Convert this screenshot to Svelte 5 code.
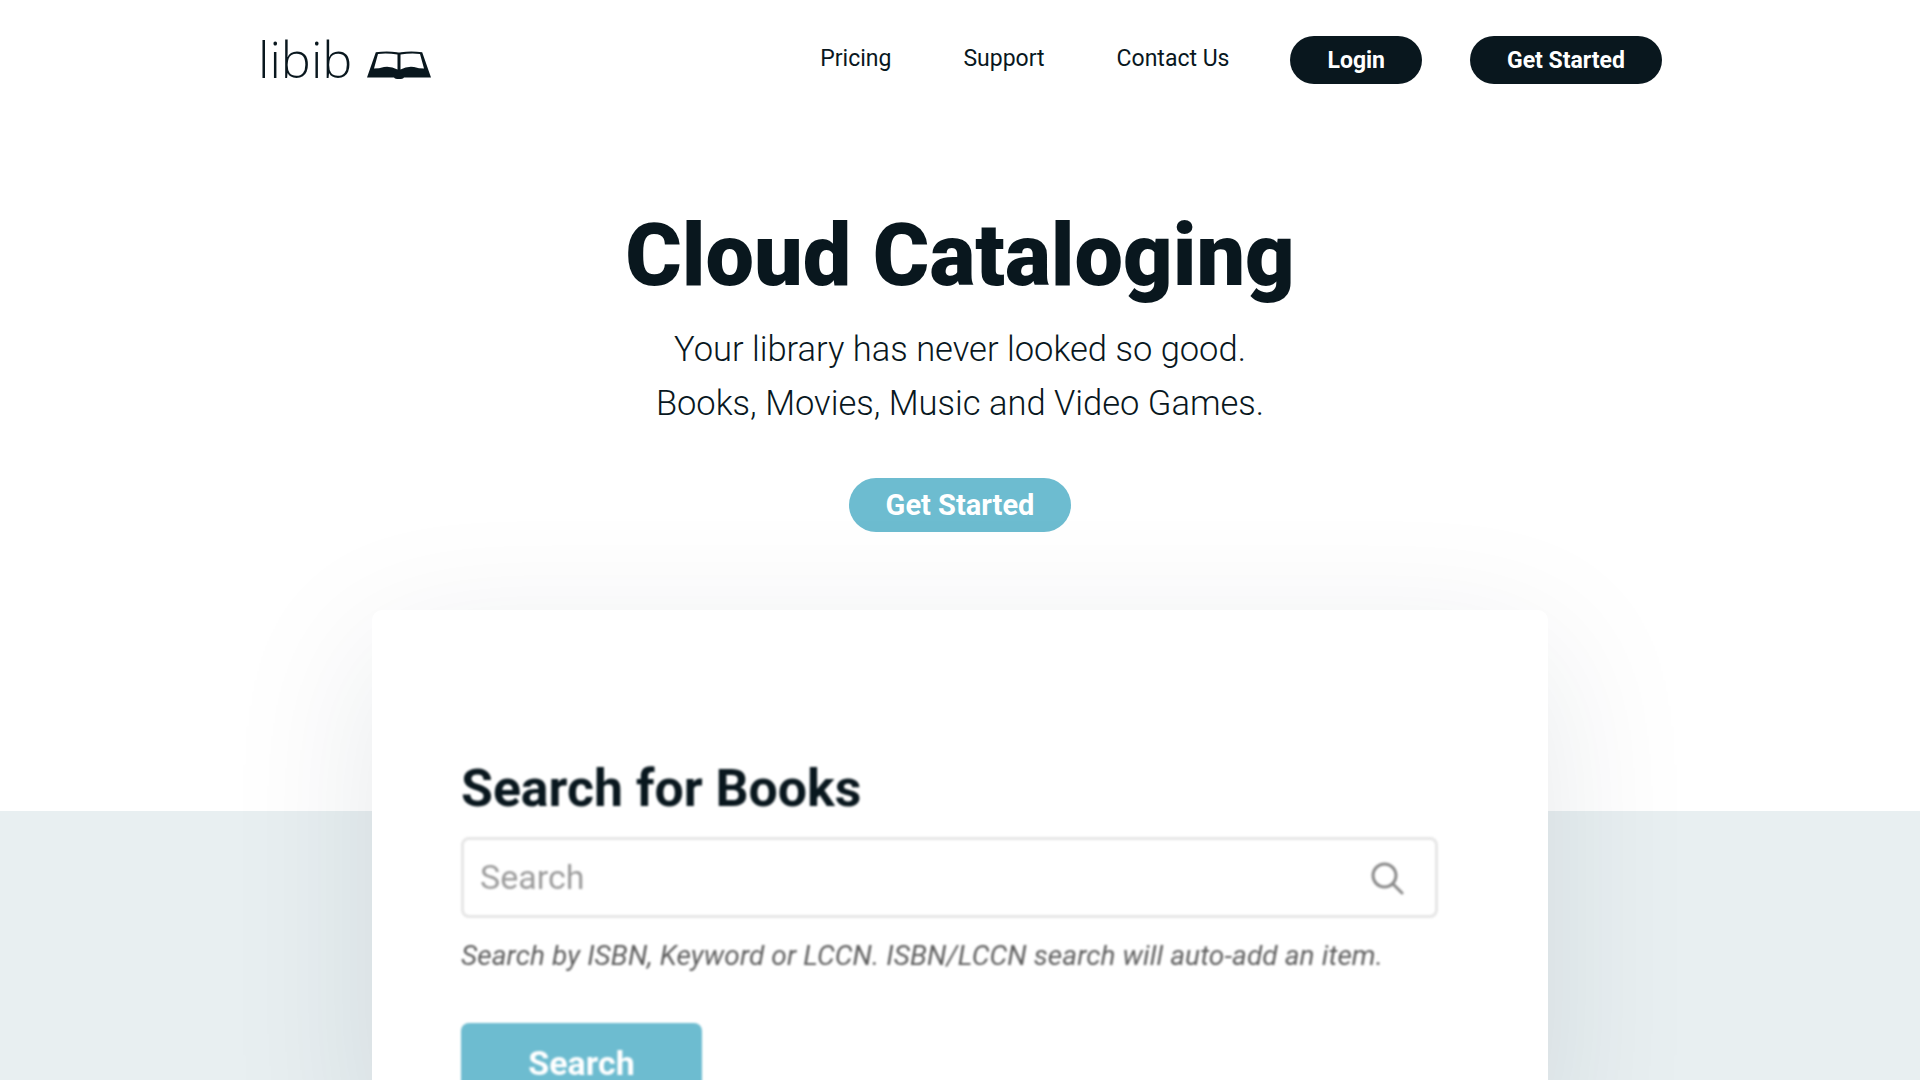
<script>
	const links = ['Pricing', 'Support', 'Contact Us'];
</script>

<div class="page">
	<header class="nav">
		<a class="logo" href="#top">
			<span class="logo-text">libib</span>
			<svg class="book" viewBox="0 0 64 28" aria-hidden="true">
				<path
					fill-rule="evenodd"
					d="M0 26.5 L8.8 1.2 Q20 -0.3 30 1.2 Q32 2 34 1.2 Q44 -0.3 55.2 1.2 L64 26.5 L37 26.5 Q36 28 32 28 Q28 28 27 26.5 Z
					M11 3 L7 17.5 Q12 17.5 17 16 Q24 15 30.5 18.5 L30.5 3.6 Q20 1.8 11 3 Z
					M53 3 L57 17.5 Q52 17.5 47 16 Q40 15 33.5 18.5 L33.5 3.6 Q44 1.8 53 3 Z"
				/>
			</svg>
		</a>
		<nav class="menu">
			{#each links as link}
				<a class="menu-link" href="#top">{link}</a>
			{/each}
			<a class="pill login" href="#top">Login</a>
			<a class="pill" href="#top">Get Started</a>
		</nav>
	</header>

	<section class="hero">
		<h1>Cloud Cataloging</h1>
		<p>Your library has never looked so good.<br />Books, Movies, Music and Video Games.</p>
		<a class="cta" href="#top">Get Started</a>
	</section>

	<section class="demo">
		<div class="card">
			<div class="card-inner">
				<h2>Search for Books</h2>
				<div class="search">
					<span class="placeholder">Search</span>
					<svg class="glass" viewBox="0 0 34 34" aria-hidden="true">
						<circle cx="14.5" cy="14.5" r="11.5" />
						<path d="M23 23 L32 32" />
					</svg>
				</div>
				<p class="hint">Search by ISBN, Keyword or LCCN. ISBN/LCCN search will auto-add an item.</p>
				<div class="search-btn">Search</div>
			</div>
		</div>
	</section>
</div>

<style>
	:global(body) {
		margin: 0;
		background: #fff;
	}

	.page {
		height: 1080px;
		overflow: hidden;
		font-family: Roboto, 'Liberation Sans', sans-serif;
		color: #09171e;
	}

	a {
		color: inherit;
		text-decoration: none;
	}

	.nav {
		display: flex;
		justify-content: space-between;
		align-items: center;
		padding: 36px 258px 0 258px;
		height: 48px;
	}

	.logo {
		display: flex;
		align-items: center;
		gap: 15px;
		margin-top: -2px;
	}

	.logo-text {
		font-family: 'Open Sans', sans-serif;
		font-weight: 300;
		font-size: 50.5px;
		line-height: 48px;
	}

	.book {
		width: 64px;
		height: 28px;
		margin-top: 11px;
		fill: #09171e;
	}

	.menu {
		display: flex;
		align-items: center;
	}

	.menu-link {
		font-size: 23px;
		margin: -4px 72px 0 0;
	}

	.menu-link:nth-child(3) {
		margin-right: 61px;
	}

	.pill {
		display: flex;
		align-items: center;
		height: 48px;
		padding: 0 37px;
		border-radius: 24px;
		background: #09171e;
		color: #fff;
		font-size: 23px;
		font-weight: 700;
	}

	.login {
		margin-right: 48px;
	}

	.hero {
		display: flex;
		flex-direction: column;
		align-items: center;
		padding-top: 118px;
	}

	h1 {
		margin: 0;
		font-size: 86.3px;
		line-height: 108px;
		font-weight: 900;
	}

	.hero p {
		margin: 12px 0 0;
		font-size: 34.5px;
		line-height: 54px;
		font-weight: 300;
		text-align: center;
	}

	.cta {
		display: flex;
		align-items: center;
		height: 54px;
		margin-top: 48px;
		padding: 0 37px;
		border-radius: 27px;
		background: #6dbcd0;
		color: #fff;
		font-size: 29px;
		font-weight: 700;
	}

	.demo {
		display: flex;
		justify-content: center;
		margin-top: 78px;
		height: 470px;
		background: linear-gradient(#fff 201px, #e8eff1 201px);
	}

	.card {
		width: 1176px;
		height: 520px;
		border-radius: 10px;
		background: #fff;
		box-shadow: 0 40px 150px rgba(9, 40, 60, 0.1);
	}

	.card-inner {
		padding: 148px 0 0 89px;
		filter: blur(0.8px);
	}

	h2 {
		margin: 0;
		font-size: 51.8px;
		line-height: 61px;
		font-weight: 700;
	}

	.search {
		display: flex;
		align-items: center;
		justify-content: space-between;
		box-sizing: border-box;
		width: 977px;
		height: 81px;
		margin-top: 18px;
		padding: 0 31px 0 16px;
		border: 3px solid #e6e6e6;
		border-radius: 8px;
	}

	.placeholder {
		margin-top: -2px;
		font-size: 34px;
		color: #9c9c9c;
	}

	.glass {
		width: 34px;
		height: 34px;
		fill: none;
		stroke: #8b8b8b;
		stroke-width: 3;
		stroke-linecap: round;
	}

	.hint {
		margin: 20px 0 0;
		font-size: 28px;
		line-height: 36px;
		letter-spacing: 0.1px;
		font-style: italic;
		color: #5f5f5f;
	}

	.search-btn {
		display: flex;
		align-items: center;
		justify-content: center;
		width: 241px;
		height: 80px;
		margin-top: 49px;
		border-radius: 8px;
		background: #6dbcd0;
		color: #fff;
		font-size: 34px;
		font-weight: 700;
	}
</style>
